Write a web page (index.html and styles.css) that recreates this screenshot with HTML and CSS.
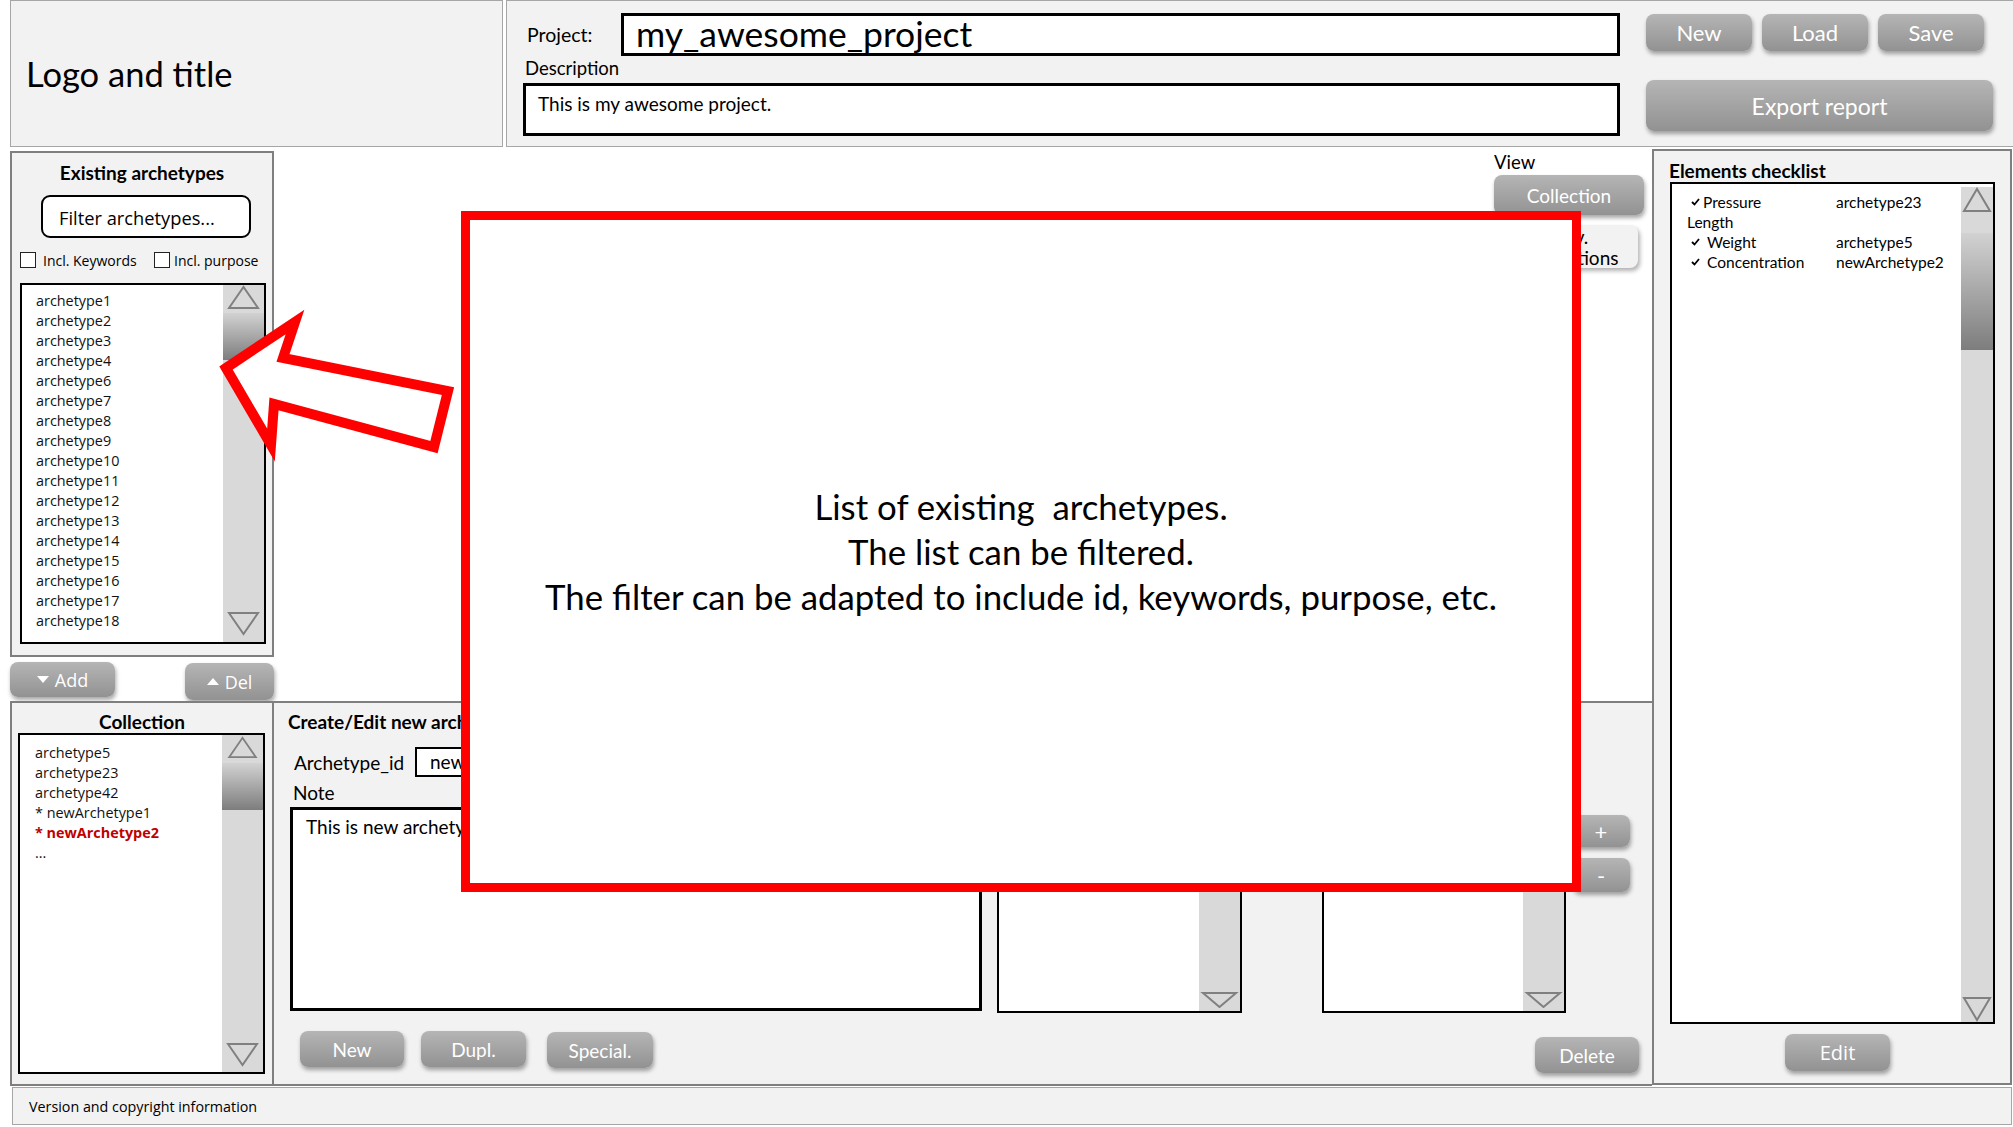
FILE: index.html
```html
<!DOCTYPE html>
<html lang="en">
<head>
<meta charset="utf-8">
<title>Archetype tool mockup</title>
<link rel="stylesheet" href="styles.css">
</head>
<body>
<div class="page">
  <header class="top">
    <div class="logo-panel"><span class="logo-text">Logo and title</span></div>
    <div class="project-panel">
      <div class="proj-fields">
        <div class="proj-row">
          <span class="lbl-project">Project:</span>
          <div class="proj-input">my_awesome_project</div>
        </div>
        <div class="lbl-desc">Description</div>
        <div class="desc-box">This is my awesome project.</div>
      </div>
      <div class="proj-actions">
        <div class="btn-row3">
          <div class="btn btn-top">New</div>
          <div class="btn btn-top">Load</div>
          <div class="btn btn-top">Save</div>
        </div>
        <div class="btn export">Export report</div>
      </div>
    </div>
  </header>

  <main class="main">
    <section class="left-top">
      <div class="panel existing">
        <div class="ptitle">Existing archetypes</div>
        <div class="filter">Filter archetypes...</div>
        <div class="checks">
          <div class="chk chk1"><span class="cbox"></span><span class="clbl">Incl. Keywords</span></div>
          <div class="chk"><span class="cbox"></span><span class="clbl clbl2">Incl. purpose</span></div>
        </div>
        <div class="listbox lb-existing">
          <div class="items">
            <div>archetype1</div><div>archetype2</div><div>archetype3</div><div>archetype4</div>
            <div>archetype6</div><div>archetype7</div><div>archetype8</div><div>archetype9</div>
            <div>archetype10</div><div>archetype11</div><div>archetype12</div><div>archetype13</div>
            <div>archetype14</div><div>archetype15</div><div>archetype16</div><div>archetype17</div>
            <div>archetype18</div>
          </div>
          <div class="sb sb-existing">
            <svg class="tri" viewBox="0 0 41 25" width="41" height="25"><polygon points="6,23 20.5,2 35,23" fill="none" stroke="#808080" stroke-width="2"/></svg>
            <div class="thumb"></div>
            <div class="sb-fill"></div>
            <svg class="tri" viewBox="0 0 41 25" width="41" height="25"><polygon points="6,2 20.5,23 35,2" fill="none" stroke="#808080" stroke-width="2"/></svg>
          </div>
        </div>
      </div>
      <div class="adddel">
        <div class="btn btn-add"><svg width="12" height="7" viewBox="0 0 12 7"><polygon points="0,0 12,0 6,7" fill="#fff"/></svg><span>Add</span></div>
        <div class="btn btn-del"><svg width="12" height="7" viewBox="0 0 12 7"><polygon points="0,7 12,7 6,0" fill="#fff"/></svg><span>Del</span></div>
      </div>
    </section>

    <section class="canvas">
      <div class="view-lbl">View</div>
      <div class="btn btn-coll">Collection</div>
      <div class="btn-light"><span>Indiv.</span><span>Descriptions</span></div>
    </section>

    <section class="panel checklist">
      <div class="ctitle">Elements checklist</div>
      <div class="listbox lb-check">
        <div class="cl-items">
          <div class="cl-row"><span class="cl-name"><svg class="ck" width="9" height="8" viewBox="0 0 9 8"><polyline points="1,4 3.5,6.5 8,1" fill="none" stroke="#000" stroke-width="1.8"/></svg>Pressure</span><span>archetype23</span></div>
          <div class="cl-row"><span class="cl-name">Length</span><span></span></div>
          <div class="cl-row"><span class="cl-name"><svg class="ck ck2" width="9" height="8" viewBox="0 0 9 8"><polyline points="1,4 3.5,6.5 8,1" fill="none" stroke="#000" stroke-width="1.8"/></svg>Weight</span><span>archetype5</span></div>
          <div class="cl-row"><span class="cl-name"><svg class="ck ck2" width="9" height="8" viewBox="0 0 9 8"><polyline points="1,4 3.5,6.5 8,1" fill="none" stroke="#000" stroke-width="1.8"/></svg>Concentration</span><span>newArchetype2</span></div>
        </div>
        <div class="sb sb-check">
          <svg class="tri" viewBox="0 0 32 26" width="32" height="26"><polygon points="3,24 16,2 29,24" fill="none" stroke="#808080" stroke-width="2"/></svg>
          <div class="thumb"></div>
          <div class="sb-fill"></div>
          <svg class="tri" viewBox="0 0 32 26" width="32" height="26"><polygon points="3,2 16,24 29,2" fill="none" stroke="#808080" stroke-width="2"/></svg>
        </div>
      </div>
      <div class="btn btn-edit">Edit</div>
    </section>

    <section class="panel collection">
      <div class="ptitle ptitle-coll">Collection</div>
      <div class="listbox lb-coll">
        <div class="items items-coll">
          <div>archetype5</div>
          <div>archetype23</div>
          <div>archetype42</div>
          <div>* newArchetype1</div>
          <div class="sel">* newArchetype2</div>
          <div>...</div>
        </div>
        <div class="sb sb-coll">
          <svg class="tri" viewBox="0 0 41 25" width="41" height="25"><polygon points="6,23 20.5,2 35,23" fill="none" stroke="#808080" stroke-width="2"/></svg>
          <div class="thumb"></div>
          <div class="sb-fill"></div>
          <svg class="tri" viewBox="0 0 41 25" width="41" height="25"><polygon points="6,2 20.5,23 35,2" fill="none" stroke="#808080" stroke-width="2"/></svg>
        </div>
      </div>
    </section>

    <section class="create">
      <div class="create-title">Create/Edit new archetype</div>
      <div class="id-row">
        <span class="id-lbl">Archetype_id</span>
        <div class="id-input">newArchetype2</div>
      </div>
      <div class="note-lbl">Note</div>
      <div class="edit-body">
        <div class="note-area">This is new archetype.</div>
        <div class="small-list sl2">
          <div class="sb sb-small">
            <div class="sb-fill"></div>
            <svg class="tri" viewBox="0 0 41 16" width="41" height="16"><polygon points="4,1 20.5,15 37,1" fill="none" stroke="#808080" stroke-width="2"/></svg>
          </div>
        </div>
        <div class="small-list sl3">
          <div class="sb sb-small">
            <div class="sb-fill"></div>
            <svg class="tri" viewBox="0 0 41 16" width="41" height="16"><polygon points="4,1 20.5,15 37,1" fill="none" stroke="#808080" stroke-width="2"/></svg>
          </div>
        </div>
        <div class="pm">
          <div class="btn btn-plus">+</div>
          <div class="btn btn-minus">-</div>
        </div>
      </div>
      <div class="create-btns">
        <div class="btn b-new">New</div>
        <div class="btn b-dupl">Dupl.</div>
        <div class="btn b-special">Special.</div>
        <div class="btn b-delete">Delete</div>
      </div>
    </section>
  </main>

  <footer class="footer">Version and copyright information</footer>

  <div class="overlay">
    <div>List of existing&nbsp; archetypes.</div>
    <div>The list can be filtered.</div>
    <div>The filter can be adapted to include id, keywords, purpose, etc.</div>
  </div>

  <svg class="arrow" width="480" height="480" viewBox="0 0 480 480">
    <polygon points="226,368 295,322 283,358 448,391 434,447 274,404 271,445" fill="#fff" stroke="#ff0000" stroke-width="10" stroke-linejoin="miter" stroke-miterlimit="10"/>
  </svg>
</div>
</body>
</html>
```

FILE: styles.css
```css
* { box-sizing: border-box; margin: 0; padding: 0; }

body {
  width: 2013px;
  height: 1127px;
  background: #fff;
  font-family: "Lato", "Open Sans", sans-serif;
  color: #000;
  overflow: hidden;
}

.page { position: relative; width: 2013px; height: 1127px; }

/* ---------- header ---------- */
.top { display: flex; height: 147px; padding-left: 10px; gap: 3px; }

.logo-panel {
  width: 493px; height: 147px;
  background: #f2f2f2; border: 1px solid #a6a6a6;
  display: flex; align-items: center; padding-left: 15px;
}
.logo-text { font-size: 34.5px; }

.project-panel {
  flex: 1; height: 147px;
  background: #f2f2f2; border: 1px solid #a6a6a6; border-right: none;
  display: flex; padding-left: 16px;
}
.proj-fields { width: 1097px; padding-top: 12px; }
.proj-row { display: flex; align-items: center; height: 43px; }
.lbl-project { width: 98px; padding-left: 4px; font-size: 19.5px; }
.proj-input {
  flex: 1; height: 43px; border: 3px solid #000; background: #fff;
  font-size: 35.5px; line-height: 36px; padding-left: 12px;
}
.lbl-desc { height: 24px; line-height: 24px; font-size: 18.5px; padding-left: 2px; }
.desc-box {
  margin-top: 3px; height: 53px; border: 3px solid #000; background: #fff;
  font-size: 19px; line-height: 24px; padding: 6px 0 0 12px;
}
.proj-actions { margin-left: 26px; width: 347px; padding-top: 13px; }
.btn-row3 { display: flex; gap: 10px; }

/* ---------- buttons ---------- */
.btn {
  display: flex; align-items: center; justify-content: center;
  background: linear-gradient(#b5b5b5, #929292);
  border-radius: 8px; color: #fff;
  box-shadow: 1px 3px 4px rgba(0, 0, 0, 0.35);
  font-family: "Lato", sans-serif;
}
.btn-top { width: 106px; height: 37px; font-size: 22px; }
.export { margin-top: 29px; width: 347px; height: 51px; font-size: 23px; }

/* ---------- main grid ---------- */
.main {
  display: grid;
  grid-template-columns: 264px 1378px 360px;
  grid-template-rows: 554px 385px;
  margin-left: 10px;
}
.left-top { grid-column: 1; grid-row: 1; padding-top: 4px; }
.canvas { grid-column: 2; grid-row: 1; }
.checklist { grid-column: 3; grid-row: 1 / 3; margin-top: 2px; height: 936px; }
.collection { grid-column: 1; grid-row: 2; }
.create { grid-column: 2; grid-row: 2; }

.panel { background: #f2f2f2; border: 2px solid #7f7f7f; }

.ptitle { text-align: center; font-weight: 700; font-size: 19px; line-height: 24px; }

/* existing archetypes */
.existing { height: 506px; padding-top: 8px; }
.filter {
  margin: 10px 0 0 29px; width: 210px; height: 43px;
  border: 2px solid #000; border-radius: 9px; background: #fff;
  font-family: "Open Sans", sans-serif; font-size: 18.3px; line-height: 41px; padding-left: 16px;
}
.checks {
  display: flex; align-items: center; margin: 14px 0 0 8px; height: 16px;
  font-family: "Open Sans", sans-serif; font-size: 14px;
}
.chk { display: flex; align-items: center; }
.chk1 { width: 134px; }
.cbox { width: 16px; height: 16px; border: 1.5px solid #222; background: #fff; flex: none; }
.clbl { margin-left: 7px; white-space: nowrap; }
.clbl2 { margin-left: 4px; }

.listbox { border: 2px solid #000; background: #fff; display: flex; }
.lb-existing { margin: 15px 0 0 8px; width: 246px; height: 361px; }
.items {
  flex: 1; padding: 6px 0 0 14px;
  font-family: "Open Sans", sans-serif; font-size: 14.4px; line-height: 20px; color: #111;
}

.sb { width: 41px; background: #d9d9d9; display: flex; flex-direction: column; flex: none; }
.tri { display: block; flex: none; }
.thumb { background: linear-gradient(#d2d2d2, #7d7d7d); flex: none; }
.sb-fill { flex: 1; }
.sb-existing .thumb { margin-top: 3px; height: 47px; }
.sb-existing { padding-bottom: 6px; }

.adddel { display: flex; justify-content: space-between; align-items: flex-start; padding-top: 5px; height: 44px; }
.btn-add, .btn-del { font-family: "Open Sans", sans-serif; font-size: 18px; gap: 6px; }
.btn-add { width: 105px; height: 35px; }
.btn-del { width: 89px; height: 37px; margin-top: 1px; }

/* canvas (view area) */
.canvas { display: flex; flex-direction: column; align-items: flex-end; padding: 3px 8px 0 0; }
.view-lbl { width: 150px; font-size: 18.5px; line-height: 24px; }
.btn-coll { width: 150px; height: 40px; margin-top: 1px; font-size: 19px; }
.btn-light {
  width: 144px; height: 43px; margin: 10px 6px 0 0;
  background: #f2f2f2; border-radius: 8px;
  box-shadow: 2px 3px 4px rgba(0, 0, 0, 0.3);
  display: flex; flex-direction: column; align-items: center; justify-content: center;
  font-size: 19px; line-height: 21px;
}

/* elements checklist */
.checklist { padding-top: 9px; }
.ctitle { padding-left: 15px; font-weight: 700; font-size: 19px; line-height: 22px; }
.lb-check { margin-left: 16px; width: 325px; height: 842px; }
.cl-items { flex: 1; padding: 8px 0 0 15px; font-size: 15.5px; line-height: 20px; }
.cl-row { display: grid; grid-template-columns: 149px auto; }
.cl-name { display: flex; align-items: center; }
.ck { margin: 0 3px 0 4px; }
.ck2 { margin-right: 7px; }
.sb-check { width: 32px; margin-top: 3px; }
.sb-check .thumb { margin-top: 20px; height: 117px; }
.btn-edit {
  width: 105px; height: 37px; margin: 10px 0 0 131px;
  font-family: "Open Sans", sans-serif; font-size: 20px;
}

/* collection */
.collection { padding-top: 8px; }
.ptitle-coll { line-height: 22px; }
.lb-coll { margin-left: 6px; width: 247px; height: 341px; }
.items-coll { padding: 8px 0 0 15px; }
.sel { color: #c00000; font-weight: 700; }
.sb-coll { padding-top: 1px; padding-bottom: 5px; }
.sb-coll .tri:first-child { height: 23px; }
.sb-coll .thumb { margin-top: 4px; height: 47px; }

/* create / edit */
.create {
  background: #f2f2f2;
  border-top: 2px solid #7f7f7f; border-bottom: 2px solid #7f7f7f;
  padding-top: 7px;
}
.create-title { padding-left: 14px; font-weight: 700; font-size: 19px; line-height: 24px; }
.id-row { display: flex; align-items: center; margin-top: 13px; height: 30px; padding-left: 20px; }
.id-lbl { width: 121px; font-size: 19px; }
.id-input {
  width: 300px; height: 30px; border: 2px solid #000; background: #fff;
  font-size: 19px; line-height: 26px; padding-left: 13px;
}
.note-lbl { margin-top: 4px; padding-left: 19px; font-size: 19px; line-height: 24px; }
.edit-body { display: flex; margin-top: 2px; height: 206px; }
.note-area {
  margin-left: 16px; width: 692px; height: 204px;
  border: 3px solid #000; background: #fff;
  font-size: 19px; line-height: 24px; padding: 5px 0 0 13px;
}
.small-list {
  height: 206px; border: 2px solid #000; background: #fff;
  display: flex; justify-content: flex-end;
}
.sl2 { margin-left: 15px; width: 245px; }
.sl3 { margin-left: 80px; width: 244px; }
.sb-small { padding-bottom: 3px; }
.pm { margin: 8px 0 0 6px; display: flex; flex-direction: column; gap: 11px; }
.btn-plus { width: 58px; height: 32px; font-size: 22px; }
.btn-minus { width: 58px; height: 34px; font-size: 22px; }

.create-btns { display: flex; align-items: flex-start; margin-top: 18px; padding-left: 26px; }
.create-btns .btn { height: 36px; font-size: 19px; }
.b-new { width: 104px; }
.b-dupl { width: 105px; margin-left: 17px; }
.b-special { width: 106px; margin-left: 21px; margin-top: 1px; }
.b-delete { width: 104px; margin-left: auto; margin-right: 13px; margin-top: 6px; }

/* footer */
.footer {
  margin: 1px 0 0 12px; width: 2000px; height: 38px;
  border: 1px solid #a6a6a6; background: #f2f2f2;
  font-family: "Open Sans", sans-serif; font-size: 14.3px;
  display: flex; align-items: center; padding-left: 16px;
}

/* annotation overlay */
.overlay {
  position: absolute; left: 461px; top: 211px;
  width: 1120px; height: 681px;
  border: 9px solid #ff0000; background: #fff;
  padding-top: 264px; text-align: center;
  font-size: 34.8px; line-height: 45px;
}
.arrow { position: absolute; left: 0; top: 0; pointer-events: none; }
```
